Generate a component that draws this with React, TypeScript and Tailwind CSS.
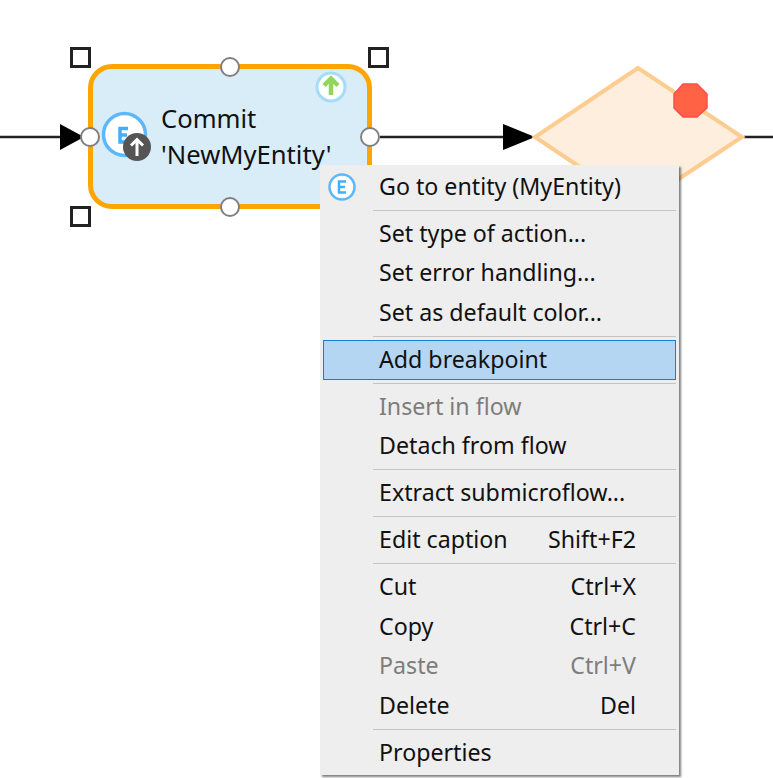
import React from "react";

type MenuEntry =
  | { type: "separator" }
  | { type: "item"; label: string; shortcut?: string; disabled?: boolean; active?: boolean; icon?: boolean };

const sep: MenuEntry = { type: "separator" };
const item = (label: string, extra: Partial<Extract<MenuEntry, { type: "item" }>> = {}): MenuEntry => ({
  type: "item",
  label,
  ...extra,
});

const entries: MenuEntry[] = [
  item("Go to entity (MyEntity)", { icon: true }),
  sep,
  item("Set type of action..."),
  item("Set error handling..."),
  item("Set as default color..."),
  sep,
  item("Add breakpoint", { active: true }),
  sep,
  item("Insert in flow", { disabled: true }),
  item("Detach from flow"),
  sep,
  item("Extract submicroflow..."),
  sep,
  item("Edit caption", { shortcut: "Shift+F2" }),
  sep,
  item("Cut", { shortcut: "Ctrl+X" }),
  item("Copy", { shortcut: "Ctrl+C" }),
  item("Paste", { shortcut: "Ctrl+V", disabled: true }),
  item("Delete", { shortcut: "Del" }),
  sep,
  item("Properties"),
];

const EntityIcon = () => (
  <svg width="28" height="28" viewBox="0 0 28 28">
    <circle cx="14" cy="14" r="12.5" fill="#fff" stroke="#5cb8fa" strokeWidth="2.5" />
    <path d="M18 8.500h-7v11h7M11 14h6" fill="none" stroke="#45aef8" strokeWidth="2.500" />
  </svg>
);

const Handle = ({ className }: { className: string }) => (
  <div className={`absolute h-[20px] w-[20px] rounded-full border-2 border-[#808080] bg-white ${className}`} />
);

const SelectBox = ({ className }: { className: string }) => (
  <div className={`absolute h-[21px] w-[21px] border-[3px] border-[#222] bg-white ${className}`} />
);

const ContextMenu = () => (
  <div className="absolute left-[320px] top-[165px] w-[359px] bg-[#eeeeee] px-[3px] py-[2px] text-[23.2px] text-[#111] shadow-[2px_2px_2px_rgba(0,0,0,0.5)]">
    {entries.map((entry, i) =>
      entry.type === "separator" ? (
        <div key={i} className="flex h-[7.5px] items-center pl-[50px]">
          <div className="h-px w-full bg-[#c4c4c4]" />
        </div>
      ) : (
        <div
          key={i}
          className={`relative flex h-[39.5px] items-center justify-between pb-[1px] ${
            entry.active ? "border border-[#1080dc] bg-[#b5d6f3] pl-[55px] pr-[39px]" : "pl-[56px] pr-[40px]"
          } ${entry.disabled ? "text-[#7d7d7d]" : ""}`}
        >
          {entry.icon && (
            <div className="absolute left-[5px] top-[6px]">
              <EntityIcon />
            </div>
          )}
          <span>{entry.label}</span>
          {entry.shortcut && <span>{entry.shortcut}</span>}
        </div>
      ),
    )}
  </div>
);

export default function App() {
  return (
    <div
      className="relative h-[778px] w-[773px] overflow-hidden bg-white"
      style={{ fontFamily: '"Noto Sans", sans-serif' }}
    >
      {/* connectors and decision shape */}
      <svg className="absolute left-0 top-0" width="773" height="778" viewBox="0 0 773 778">
        <path d="M0 137H70M380 137H505M744 137H773" stroke="#222" strokeWidth="2.5" fill="none" />
        <path d="M60 124L84 137L60 150Z" fill="#000" />
        <path d="M503 124L535 137L503 150Z" fill="#000" />
        <path d="M638 68L742 137L638 206L535 137Z" fill="#feeede" stroke="#fdcc90" strokeWidth="4" />
        <path
          d="M683 84H697L707 94V108L697 117H683L674 108V94Z"
          fill="#ff6244"
          stroke="#ff4d4d"
          strokeWidth="1.5"
        />
      </svg>

      {/* activity node */}
      <div className="absolute left-[88px] top-[64px] flex h-[145px] w-[284px] items-center rounded-[24px] border-[5px] border-[#ffa500] bg-[#d9edf9] pl-[68px] text-[25.6px] leading-[36px] text-[#111]">
        <div>
          <div>Commit</div>
          <div>'NewMyEntity'</div>
        </div>
      </div>

      <svg className="absolute left-[100px] top-[110px]" width="56" height="56" viewBox="0 0 56 56">
        <circle cx="24.500" cy="24.500" r="21" fill="#fff" stroke="#5cb8fa" strokeWidth="3.5" />
        <path d="M28 18.500H20V32H28M20 25H27" fill="none" stroke="#45aef8" strokeWidth="3.5" />
        <circle cx="37" cy="37" r="14" fill="#555" />
        <path d="M37 46V30M31 35.500L37 29.500L43 35.500" fill="none" stroke="#fff" strokeWidth="3" />
      </svg>

      <svg className="absolute left-[315px] top-[71px]" width="32" height="32" viewBox="0 0 32 32">
        <circle cx="16" cy="16" r="14" fill="#fff" stroke="#a5dcfb" strokeWidth="3" />
        <path d="M16 24V8M9 14.500L16 7.500L23 14.500" fill="none" stroke="#93d65c" strokeWidth="4.500" />
      </svg>

      <Handle className="left-[220px] top-[57px]" />
      <Handle className="left-[220px] top-[197px]" />
      <Handle className="left-[80px] top-[127px]" />
      <Handle className="left-[360px] top-[127px]" />

      <SelectBox className="left-[70px] top-[47px]" />
      <SelectBox className="left-[368px] top-[47px]" />
      <SelectBox className="left-[70px] top-[206px]" />

      <ContextMenu />
    </div>
  );
}
